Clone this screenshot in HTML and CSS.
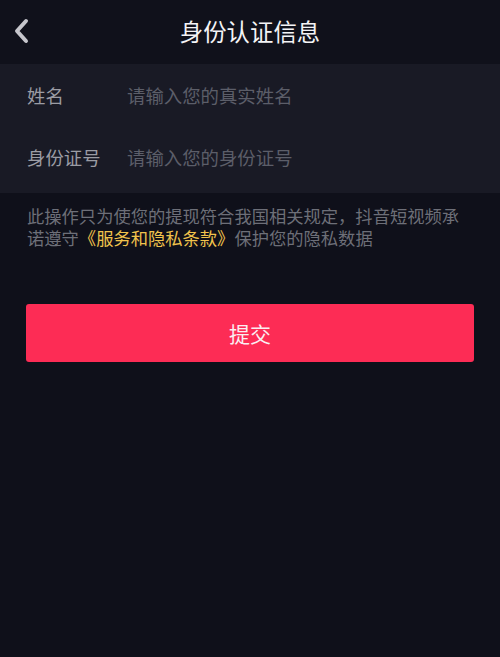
FILE: index.html
```html
<!DOCTYPE html>
<html lang="zh-CN">
<head>
<meta charset="utf-8">
<title>身份认证信息</title>
<link rel="stylesheet" href="styles.css">
</head>
<body>
<div class="page">
  <header class="topbar">
    <svg class="back" width="44" height="60" viewBox="0 0 44 60" aria-hidden="true">
      <polyline points="26,20 17,30 26,40" fill="none" stroke="#c6c6cc" stroke-width="4" stroke-linecap="round" stroke-linejoin="round"/>
    </svg>
    <h1 class="title">身份认证信息</h1>
  </header>
  <section class="form">
    <div class="row">
      <span class="label">姓名</span>
      <span class="placeholder">请输入您的真实姓名</span>
    </div>
    <div class="row">
      <span class="label">身份证号</span>
      <span class="placeholder">请输入您的身份证号</span>
    </div>
  </section>
  <p class="notice">此操作只为使您的提现符合我国相关规定，抖音短视频承诺遵守<span class="link">《服务和隐私条款》</span>保护您的隐私数据</p>
  <div class="actions">
    <button class="submit" type="button">提交</button>
  </div>
</div>
</body>
</html>
```

FILE: styles.css
```css
html, body {
  margin: 0;
  padding: 0;
  background: #0f101a;
}
body {
  font-family: "Noto Sans CJK SC", "Noto Sans", sans-serif;
  width: 500px;
  height: 657px;
  overflow: hidden;
}
.page {
  display: flex;
  flex-direction: column;
}
.topbar {
  position: relative;
  height: 64px;
  display: flex;
  align-items: center;
  justify-content: center;
  background: #10111b;
}
.back {
  position: absolute;
  left: 0;
  top: 1px;
}
.title {
  margin: 0;
  font-size: 23.4px;
  font-weight: 400;
  color: #f4f4f6;
  line-height: 1;
}
.form {
  background: #191a25;
  padding-bottom: 5px;
}
.row {
  height: 62px;
  display: flex;
  align-items: center;
  padding-left: 27px;
}
.label {
  width: 100px;
  font-size: 18.4px;
  color: #9b9ca4;
  line-height: 1;
}
.placeholder {
  font-size: 18.4px;
  color: #5c5e69;
  line-height: 1;
}
.notice {
  margin: 12px 27px 0;
  font-size: 17.3px;
  line-height: 22px;
  color: #6d6f78;
}
.link {
  color: #f1c34c;
}
.actions {
  padding: 0 26px 0 26px;
  margin-top: 55px;
}
.submit {
  width: 100%;
  height: 58px;
  border: none;
  border-radius: 3px;
  background: #fd2c55;
  color: #fbeef1;
  font-family: "Noto Sans CJK SC", sans-serif;
  font-size: 21px;
  padding: 0;
}
```
